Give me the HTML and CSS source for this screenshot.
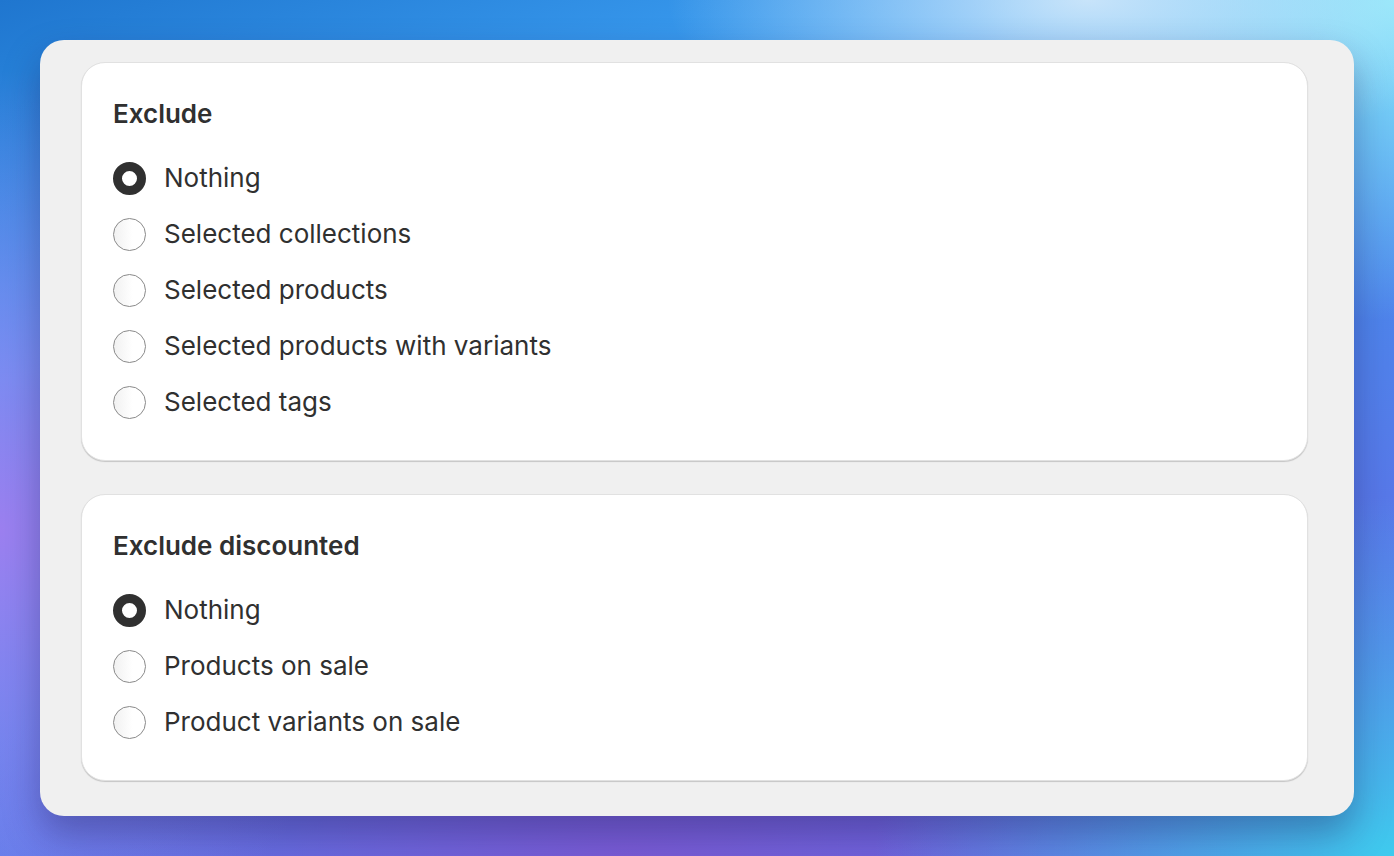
FILE: index.html
```html
<!DOCTYPE html>
<html lang="en">
<head>
    <meta charset="UTF-8">
    <meta name="viewport" content="width=device-width, initial-scale=1.0">
    <title>Exclude settings</title>
    <link rel="stylesheet" href="styles.css">
</head>
<body>
    <div class="frame">
        <section class="card">
            <h2 class="card-title">Exclude</h2>
            <div class="choices">
                <label class="choice">
                    <input type="radio" name="exclude" checked>
                    <span class="radio"></span>
                    <span class="choice-label">Nothing</span>
                </label>
                <label class="choice">
                    <input type="radio" name="exclude">
                    <span class="radio"></span>
                    <span class="choice-label">Selected collections</span>
                </label>
                <label class="choice">
                    <input type="radio" name="exclude">
                    <span class="radio"></span>
                    <span class="choice-label">Selected products</span>
                </label>
                <label class="choice">
                    <input type="radio" name="exclude">
                    <span class="radio"></span>
                    <span class="choice-label">Selected products with variants</span>
                </label>
                <label class="choice">
                    <input type="radio" name="exclude">
                    <span class="radio"></span>
                    <span class="choice-label">Selected tags</span>
                </label>
            </div>
        </section>

        <section class="card">
            <h2 class="card-title">Exclude discounted</h2>
            <div class="choices">
                <label class="choice">
                    <input type="radio" name="discounted" checked>
                    <span class="radio"></span>
                    <span class="choice-label">Nothing</span>
                </label>
                <label class="choice">
                    <input type="radio" name="discounted">
                    <span class="radio"></span>
                    <span class="choice-label">Products on sale</span>
                </label>
                <label class="choice">
                    <input type="radio" name="discounted">
                    <span class="radio"></span>
                    <span class="choice-label">Product variants on sale</span>
                </label>
            </div>
        </section>
    </div>
</body>
</html>
```

FILE: styles.css
```css
html, body {
    height: 100%;
}
body {
    margin: 0;
    font-family: Inter, "Noto Sans", sans-serif;
    color: #303030;
    overflow: hidden;
    background:
        radial-gradient(ellipse 420px 160px at 78% 0%, rgba(206, 230, 250, 0.95), rgba(206, 230, 250, 0) 100%),
        radial-gradient(ellipse 420px 320px at 100% 0%, #8ae8fa, rgba(138, 232, 250, 0) 100%),
        radial-gradient(ellipse 520px 360px at 100% 100%, #3ecbee, rgba(62, 203, 238, 0) 100%),
        radial-gradient(ellipse 380px 460px at 0% 62%, #9c80f0, rgba(156, 128, 240, 0) 100%),
        radial-gradient(ellipse 700px 260px at 45% 100%, #7a5cd6, rgba(122, 92, 214, 0) 100%),
        linear-gradient(160deg, #1f76cf 0%, #3fa3f6 28%, #4d86ec 58%, #6a62e4 100%);
}
.frame {
    box-sizing: border-box;
    margin: 40px 40px 0;
    height: 776px;
    padding: 22px 46px 0 41px;
    background-color: #f0f0f0;
    border-radius: 24px;
    box-shadow: 0 18px 36px rgba(30, 20, 80, 0.35);
    display: flex;
    flex-direction: column;
    gap: 33px;
}
.card {
    background-color: #ffffff;
    border: 1px solid #e1e1e1;
    border-radius: 24px;
    padding: 35px 31px 42px;
    box-shadow: 0 1px 1px rgba(0, 0, 0, 0.18);
}
.card-title {
    margin: 0 0 32px;
    font-size: 26px;
    line-height: 32px;
    font-weight: 600;
}
.choices {
    display: flex;
    flex-direction: column;
    gap: 24px;
}
.choice {
    display: flex;
    align-items: center;
    gap: 18px;
    height: 32px;
    cursor: pointer;
}
.choice input {
    display: none;
}
.radio {
    box-sizing: border-box;
    width: 33px;
    height: 33px;
    border-radius: 50%;
    border: 1px solid #8a8a8a;
    background: linear-gradient(90deg, #f1f1f1, #ffffff 60%);
}
.choice input:checked + .radio {
    border: 9px solid #303030;
    background: #ffffff;
}
.choice-label {
    font-size: 26px;
    line-height: 32px;
}
```
